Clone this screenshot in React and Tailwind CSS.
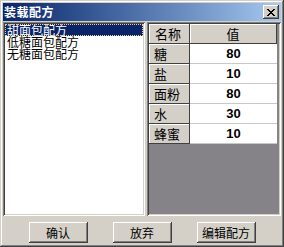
import React from 'react'

const raised = 'shadow-[inset_-1px_-1px_0_#404040,inset_1px_1px_0_#ffffff,inset_-2px_-2px_0_#808080,inset_2px_2px_0_#d4d0c8]'
const sunken = 'shadow-[inset_1px_1px_0_#808080,inset_-1px_-1px_0_#ffffff,inset_2px_2px_0_#404040,inset_-2px_-2px_0_#d4d0c8]'

const recipes = ['甜面包配方', '低糖面包配方', '无糖面包配方']
const items = [
  ['糖', '80'],
  ['盐', '10'],
  ['面粉', '80'],
  ['水', '30'],
  ['蜂蜜', '10'],
]

function Btn({ children }) {
  return (
    <div className={`w-[59px] h-[21px] flex items-center justify-center bg-[#d4d0c8] text-[12px] text-black ${raised}`}>
      {children}
    </div>
  )
}

export default function App() {
  return (
    <div
      className="w-[284px] h-[247px] bg-[#d4d0c8] p-[3px] flex flex-col shadow-[inset_-1px_-1px_0_#404040,inset_1px_1px_0_#d4d0c8,inset_-2px_-2px_0_#808080,inset_2px_2px_0_#ffffff]"
      style={{ fontFamily: '"Noto Sans CJK SC", "Liberation Sans", sans-serif' }}
    >
      {/* title bar */}
      <div className="h-[18px] flex items-center justify-between pl-[1px] pr-[2px] bg-gradient-to-r from-[#0a246a] to-[#a6caf0]">
        <span className="text-white font-bold text-[12px] tracking-[0.5px] leading-none">装载配方</span>
        <div className={`w-[16px] h-[14px] bg-[#d4d0c8] flex items-center justify-center ${raised}`}>
          <svg width="8" height="7" viewBox="0 0 8 7" shapeRendering="crispEdges">
            <path d="M0 0h2v1H0zM6 0h2v1H6zM1 1h2v1H1zM5 1h2v1H5zM2 2h4v1H2zM3 3h2v1H3zM2 4h4v1H2zM1 5h2v1H1zM5 5h2v1H5zM0 6h2v1H0zM6 6h2v1H6z" fill="#000" />
          </svg>
        </div>
      </div>

      {/* body */}
      <div className="mt-[1px] h-[194px] flex gap-[2px]">
        <div className={`w-[142px] bg-white p-[2px] ${sunken}`}>
          {recipes.map((r, i) => (
            <div
              key={r}
              className={`h-[12px] flex items-center pl-[2px] text-[12px] leading-none ${
                i === 0 ? 'bg-[#0a246a] text-white outline outline-1 outline-dotted outline-[#f0d080] -outline-offset-1' : 'text-black'
              }`}
            >
              {r}
            </div>
          ))}
        </div>

        <div className={`flex-1 bg-[#858288] p-[2px] ${sunken}`}>
          <div className="w-[128px]">
            <div className="flex h-[20px]">
              <div className="w-[41px] flex items-center pl-[6px] text-[13px] bg-[#d4d0c8] border-r border-b border-[#404040] shadow-[inset_1px_1px_0_#ffffff]">
                名称
              </div>
              <div className="flex-1 flex items-center justify-center text-[13px] bg-[#d4d0c8] border-r border-b border-[#404040] shadow-[inset_1px_1px_0_#ffffff]">
                值
              </div>
            </div>
            {items.map(([n, v]) => (
              <div key={n} className="flex h-[20px]">
                <div className="w-[41px] flex items-center pl-[5px] text-[13px] bg-[#d4d0c8] border-r border-b border-[#404040] shadow-[inset_1px_1px_0_#ffffff]">
                  {n}
                </div>
                <div
                  className="flex-1 flex items-center justify-center bg-white border-b border-[#c8c8c8] font-bold text-[13px] text-black"
                  style={{ fontFamily: '"Liberation Sans", sans-serif' }}
                >
                  {v}
                </div>
              </div>
            ))}
          </div>
        </div>
      </div>

      {/* buttons */}
      <div className="mt-[6px] flex justify-center gap-[25px]">
        <Btn>确认</Btn>
        <Btn>放弃</Btn>
        <Btn>编辑配方</Btn>
      </div>
    </div>
  )
}
